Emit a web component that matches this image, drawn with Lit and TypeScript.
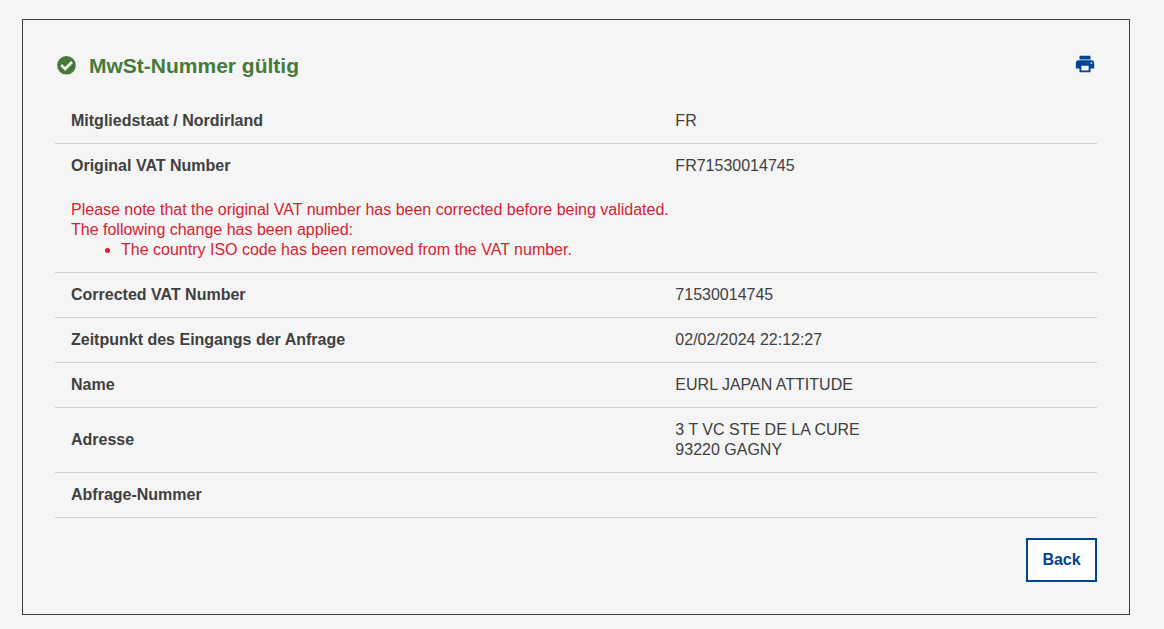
import { LitElement, html, css } from "lit";
import { customElement } from "lit/decorators.js";

@customElement("app-root")
export class AppRoot extends LitElement {
  static styles = css`
    :host {
      display: block;
      box-sizing: border-box;
      min-height: 100vh;
      padding: 19px 34px 14px 22px;
      background: #f5f5f5;
      color: #404040;
      font: 16px/20px "Liberation Sans", Arial, sans-serif;
    }
    .card {
      border: 1px solid #404040;
      padding: 32px;
    }
    .head {
      display: flex;
      align-items: center;
      height: 28px;
      margin-bottom: 19px;
    }
    .ok {
      width: 20px;
      height: 20px;
      margin: 0 12px 2px 2px;
    }
    .ok circle {
      fill: #467a39;
    }
    .ok path {
      fill: none;
      stroke: #fff;
      stroke-width: 2.6;
    }
    h2 {
      flex: 1;
      margin: 0;
      color: #467a39;
      font-size: 21px;
      line-height: 28px;
    }
    .print {
      display: flex;
      margin: 0 1px 4px 0;
      padding: 0;
      border: 0;
      background: none;
      cursor: pointer;
    }
    .print svg {
      width: 22px;
      height: 22px;
      fill: #004494;
    }
    table {
      width: 100%;
      border-collapse: collapse;
      table-layout: fixed;
    }
    th,
    td {
      padding: 12px 16px;
      text-align: left;
      vertical-align: middle;
    }
    .label {
      width: 58%;
      box-sizing: border-box;
    }
    .line {
      border-bottom: 1px solid #cfcfcf;
    }
    .note {
      color: #da2131;
    }
    .note ul {
      margin: 0;
      padding-left: 50px;
    }
    .foot {
      display: flex;
      justify-content: flex-end;
      margin-top: 20px;
    }
    .back {
      min-width: 71px;
      padding: 10px 14px;
      border: 2px solid #004494;
      background: #fff;
      color: #004494;
      font: bold 16px/20px "Liberation Sans", Arial, sans-serif;
      cursor: pointer;
    }
  `;

  render() {
    return html`
      <main class="card">
        <header class="head">
          <svg class="ok" viewBox="0 0 20 20" aria-hidden="true">
            <circle cx="9.500" cy="10.300" r="9.300" />
            <path d="M4.200 10 8.200 13.900 15 7" />
          </svg>
          <h2>MwSt-Nummer gültig</h2>
          <button class="print" aria-label="Print">
            <svg viewBox="0 0 24 24" aria-hidden="true">
              <path d="M19 8H5c-1.660 0-3 1.340-3 3v6h4v4h12v-4h4v-6c0-1.660-1.340-3-3-3zm-3 11H8v-5h8v5zm3-7c-.550 0-1-.450-1-1s.450-1 1-1 1 .450 1 1-.450 1-1 1zm-1-9H6v4h12V3z" />
            </svg>
          </button>
        </header>
        <table>
          <tbody>
            <tr class="line">
              <th class="label" scope="row">Mitgliedstaat / Nordirland</th>
              <td>FR</td>
            </tr>
            <tr>
              <th scope="row">Original VAT Number</th>
              <td>FR71530014745</td>
            </tr>
            <tr class="line">
              <td class="note" colspan="2">
                Please note that the original VAT number has been corrected before being validated.<br />
                The following change has been applied:
                <ul>
                  <li>The country ISO code has been removed from the VAT number.</li>
                </ul>
              </td>
            </tr>
            <tr class="line">
              <th scope="row">Corrected VAT Number</th>
              <td>71530014745</td>
            </tr>
            <tr class="line">
              <th scope="row">Zeitpunkt des Eingangs der Anfrage</th>
              <td>02/02/2024 22:12:27</td>
            </tr>
            <tr class="line">
              <th scope="row">Name</th>
              <td>EURL JAPAN ATTITUDE</td>
            </tr>
            <tr class="line">
              <th scope="row">Adresse</th>
              <td>3 T VC STE DE LA CURE<br />93220 GAGNY</td>
            </tr>
            <tr class="line">
              <th scope="row">Abfrage-Nummer</th>
              <td></td>
            </tr>
          </tbody>
        </table>
        <div class="foot"><button class="back">Back</button></div>
      </main>
    `;
  }
}
